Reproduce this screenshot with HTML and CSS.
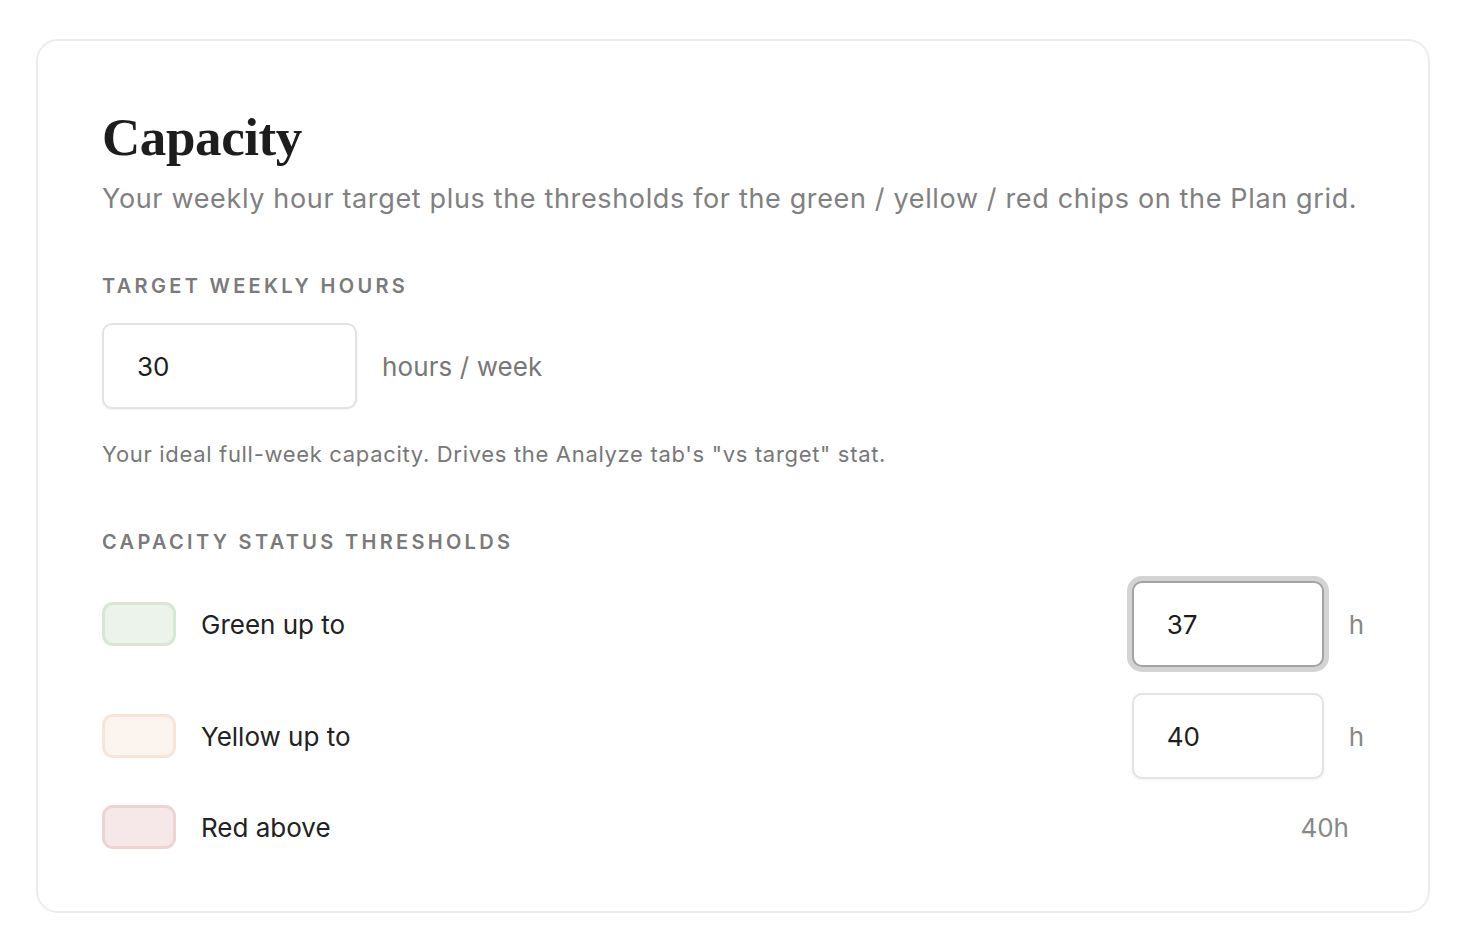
FILE: index.html
```html
<!DOCTYPE html>
<html lang="en">
<head>
    <meta charset="UTF-8">
    <meta name="viewport" content="width=device-width, initial-scale=1.0">
    <title>Capacity</title>
    <link rel="stylesheet" href="styles.css">
</head>
<body>
    <section class="card">
        <h1 class="title">Capacity</h1>
        <p class="subtitle">Your weekly hour target plus the thresholds for the green / yellow / red chips on the Plan grid.</p>

        <div class="label">Target weekly hours</div>
        <div class="targetRow">
            <input class="field fieldWide" type="text" value="30">
            <span class="unit">hours / week</span>
        </div>
        <p class="help">Your ideal full-week capacity. Drives the Analyze tab's "vs target" stat.</p>

        <div class="label labelGap">Capacity status thresholds</div>
        <div class="thresholds">
            <div class="swatch swatchGreen"></div>
            <div class="rowName">Green up to</div>
            <input class="field isFocused" type="text" value="37">
            <span class="unitSmall">h</span>

            <div class="swatch swatchYellow"></div>
            <div class="rowName">Yellow up to</div>
            <input class="field" type="text" value="40">
            <span class="unitSmall">h</span>

            <div class="swatch swatchRed"></div>
            <div class="rowName">Red above</div>
            <span class="above">40h</span>
        </div>
    </section>
</body>
</html>
```

FILE: styles.css
```css
body {
    margin: 0;
    background: #fff;
    font-family: Inter, "Liberation Sans", sans-serif;
}

.card {
    box-sizing: border-box;
    width: 1394px;
    height: 874px;
    margin: 39px 0 0 36px;
    padding: 66px 64px 0 64px;
    border: 2px solid #ececec;
    border-radius: 22px;
}

.title {
    margin: 0;
    font-family: "Liberation Serif", serif;
    font-weight: bold;
    font-size: 53px;
    line-height: 60px;
    color: #1d1d1d;
    letter-spacing: -0.4px;
}

.subtitle {
    margin: 14px 0 0;
    font-size: 27px;
    line-height: 36px;
    letter-spacing: 0.65px;
    color: #808080;
}

.label {
    margin-top: 57px;
    font-size: 20px;
    line-height: 24px;
    font-weight: 600;
    letter-spacing: 3.3px;
    text-transform: uppercase;
    color: #7a7a7a;
}
.labelGap {
    margin-top: 62px;
}

.targetRow {
    display: flex;
    align-items: center;
    gap: 25px;
    margin-top: 25px;
}

.field {
    box-sizing: border-box;
    width: 192px;
    height: 86px;
    padding: 0 0 0 33px;
    border: 2px solid #e3e3e3;
    border-radius: 10px;
    background: #fff;
    box-shadow: 0 1px 3px rgba(0, 0, 0, 0.06);
    font-family: inherit;
    font-size: 26px;
    color: #1d1d1d;
    outline: none;
}
.fieldWide {
    width: 255px;
}
.isFocused {
    border-color: #a3a3a3;
    box-shadow: 0 0 0 5px #d3d3d3;
}

.unit {
    font-size: 26px;
    letter-spacing: 0.1px;
    color: #777;
}

.help {
    margin: 31px 0 0;
    font-size: 22px;
    line-height: 28px;
    letter-spacing: 0.68px;
    color: #777;
}

.thresholds {
    display: grid;
    grid-template-columns: 74px 1fr 192px auto;
    align-items: center;
    column-gap: 25px;
    row-gap: 26px;
    margin-top: 27px;
}

.swatch {
    box-sizing: border-box;
    height: 44px;
    border: 3px solid;
    border-radius: 11px;
}
.swatchGreen {
    background: #ebf3eb;
    border-color: #d7e7d6;
}
.swatchYellow {
    background: #fcf4ee;
    border-color: #f8e5d6;
}
.swatchRed {
    background: #f6e8e8;
    border-color: #edd3d2;
}

.rowName {
    font-size: 26px;
    color: #222;
}

.unitSmall {
    font-size: 26px;
    color: #888;
}

.above {
    grid-column: 3 / 5;
    padding-right: 15px;
    text-align: right;
    font-size: 26px;
    color: #888;
}
```
